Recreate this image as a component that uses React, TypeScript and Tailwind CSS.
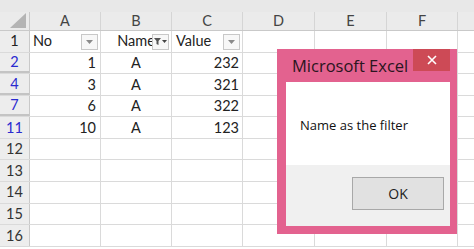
import React from 'react';

const cols = [
  { key: 'A', w: 'w-[71px]' },
  { key: 'B', w: 'w-[71px]' },
  { key: 'C', w: 'w-[71px]' },
  { key: 'D', w: 'w-[72px]' },
  { key: 'E', w: 'w-[72px]' },
  { key: 'F', w: 'w-[71px]' },
];

type Row = { n: number; blue?: boolean; hidden?: boolean; cells?: string[] };

const rows: Row[] = [
  { n: 2, blue: true, hidden: true, cells: ['1', 'A', '232'] },
  { n: 4, blue: true, hidden: true, cells: ['3', 'A', '321'] },
  { n: 7, blue: true, hidden: true, cells: ['6', 'A', '322'] },
  { n: 11, blue: true, cells: ['10', 'A', '123'] },
  { n: 12 },
  { n: 13 },
  { n: 14 },
  { n: 15 },
  { n: 16 },
];

// small dropdown arrow button in header cells
const FilterButton = ({ active }: { active?: boolean }) => (
  <div className="absolute right-[2px] top-[3px] w-[17px] h-[16px] bg-[#f7f7f7] border border-[#c8c8c8] flex items-center justify-center">
    {active ? (
      <svg width="13" height="8" viewBox="0 0 13 8">
        <path d="M0 0h7L4.5 3v4L2.5 6V3z" fill="#555" />
        <path d="M8 2h5l-2.5 3z" fill="#444" />
      </svg>
    ) : (
      <svg width="7" height="4" viewBox="0 0 7 4">
        <path d="M0 0h7L3.5 4z" fill="#8a8a8a" />
      </svg>
    )}
  </div>
);

const App: React.FC = () => {
  return (
    <div className="relative w-[474px] h-[249px] overflow-hidden bg-white font-['Lato',sans-serif] text-[14.5px] text-[#222]">
      {/* Top strip */}
      <div className="h-[12px] bg-[#e8e8e8]" />

      {/* Column headers */}
      <div className="flex h-[19px] bg-[#ebebeb] border-b border-[#c9c9c9]">
        <div className="w-[30px] shrink-0 border-r border-[#c9c9c9] relative">
          <svg className="absolute right-[3px] bottom-[2px]" width="16" height="15" viewBox="0 0 16 15">
            <path d="M16 0v15H0z" fill="#b4b4b4" />
          </svg>
        </div>
        {cols.map((c) => (
          <div
            key={c.key}
            className={`${c.w} shrink-0 border-r border-[#d5d5d5] flex items-center justify-center text-[#444] leading-none`}
          >
            {c.key}
          </div>
        ))}
        <div className="flex-1" />
      </div>

      {/* Row 1 (header row of table) */}
      <div className="flex h-[21.5px] border-b border-[#dadada]">
        <div className="w-[30px] shrink-0 bg-[#ededed] border-r border-[#c9c9c9] flex items-center justify-center text-[#222]">
          1
        </div>
        <div className="w-[71px] shrink-0 border-r border-[#dadada] relative flex items-center pl-[3px]">
          No
          <FilterButton />
        </div>
        <div className="w-[71px] shrink-0 border-r border-[#dadada] relative flex items-center justify-center overflow-hidden">
          <span>Name</span>
          <FilterButton active />
        </div>
        <div className="w-[71px] shrink-0 border-r border-[#dadada] relative flex items-center pl-[4px]">
          Value
          <FilterButton />
        </div>
        <div className="w-[72px] shrink-0 border-r border-[#dadada]" />
        <div className="w-[72px] shrink-0 border-r border-[#dadada]" />
        <div className="w-[71px] shrink-0 border-r border-[#dadada]" />
        <div className="flex-1" />
      </div>

      {rows.map((r) => (
        <div key={r.n} className="flex h-[21.6px] border-b border-[#dadada]">
          <div
            className={`w-[30px] shrink-0 bg-[#ededed] border-r border-[#c9c9c9] flex items-center justify-center ${
              r.blue ? 'text-[#2a2ad0]' : 'text-[#333]'
            } ${r.hidden ? 'border-b-[2px] border-b-[#c4c4c4]' : ''}`}
          >
            {r.n}
          </div>
          <div className="w-[71px] shrink-0 border-r border-[#dadada] flex items-center justify-end pr-[4px]">
            {r.cells?.[0]}
          </div>
          <div className="w-[71px] shrink-0 border-r border-[#dadada] flex items-center justify-center">
            {r.cells?.[1]}
          </div>
          <div className="w-[71px] shrink-0 border-r border-[#dadada] flex items-center justify-end pr-[3px]">
            {r.cells?.[2]}
          </div>
          <div className="w-[72px] shrink-0 border-r border-[#dadada]" />
          <div className="w-[72px] shrink-0 border-r border-[#dadada]" />
          <div className="w-[71px] shrink-0 border-r border-[#dadada]" />
          <div className="flex-1" />
        </div>
      ))}

      {/* Message box */}
      <div className="absolute left-[277px] top-[49px] w-[180px] h-[185px] bg-[#e3628f] flex flex-col pl-[9px] pr-[7px] pb-[8px] font-['Open_Sans',sans-serif]">
        <div className="h-[33px] flex items-start shrink-0">
          <div className="flex-1 pl-[6px] pt-[7px] text-[16.5px] leading-[20px] text-[#2a1520]">Microsoft Excel</div>
          <div className="w-[37px] h-[22px] bg-[#cd4a56] flex items-center justify-center">
            <svg width="10" height="10" viewBox="0 0 10 10">
              <path d="M1 1l8 8M9 1l-8 8" stroke="#fff" strokeWidth="1.6" />
            </svg>
          </div>
        </div>
        <div className="h-[83px] bg-white flex items-center pl-[14px] pt-[4px] text-[13px] text-[#111]">
          Name as the filter
        </div>
        <div className="flex-1 bg-[#f0f0f0] flex items-start justify-end pr-[6px] pt-[12px]">
          <div className="w-[92px] h-[33px] bg-[#e1e1e1] border border-[#a8a8a8] flex items-center justify-center text-[14px] text-[#222]">
            OK
          </div>
        </div>
      </div>
    </div>
  );
};

export default App;
